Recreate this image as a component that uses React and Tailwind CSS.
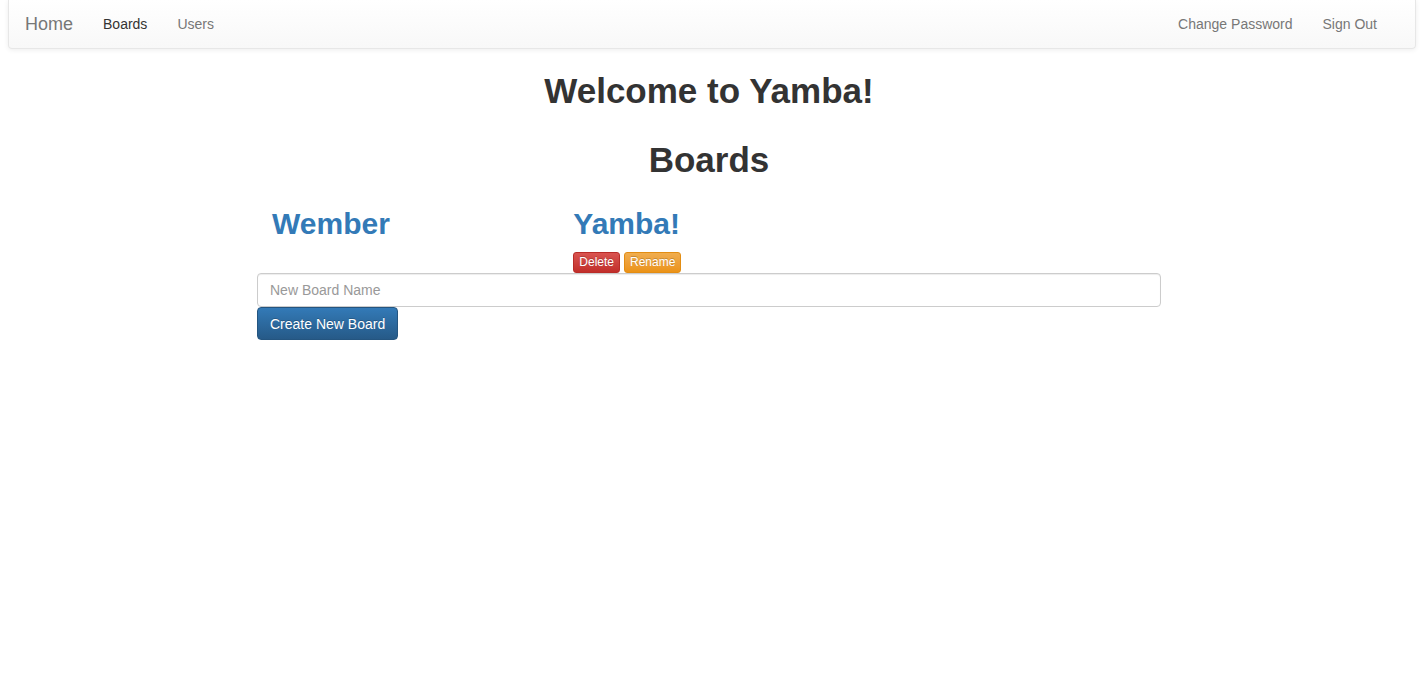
import React from "react";

const boards = [
  { name: "Wember", editable: false },
  { name: "Yamba!", editable: true },
];

export default function App() {
  return (
    <div className="min-h-screen bg-white text-[#333] font-['Liberation_Sans',Arial,sans-serif] text-[14px]">

      {/* Navbar */}

      <nav className="
        mx-2 h-[49px]
        flex items-center justify-between
        bg-gradient-to-b from-white to-[#f8f8f8]
        border border-t-0 border-[#e7e7e7]
        rounded-b-[4px]
        shadow-[0_1px_5px_rgba(0,0,0,0.075)]
      ">
        <div className="flex items-center">
          <a className="pl-4 pr-[15px] text-[18px] text-[#777] leading-[20px]">Home</a>
          <a className="px-[15px] text-[#333] leading-[20px]">Boards</a>
          <a className="px-[15px] text-[#777] leading-[20px]">Users</a>
        </div>
        <div className="flex items-center pr-[23px]">
          <a className="px-[15px] text-[#777] leading-[20px]">Change Password</a>
          <a className="px-[15px] text-[#777] leading-[20px]">Sign Out</a>
        </div>
      </nav>

      {/* Content */}

      <main className="ml-[257px] w-[904px]">
        <h1 className="mt-[23px] text-center text-[35px] leading-[1.1] font-bold">
          Welcome to Yamba!
        </h1>
        <h1 className="mt-[30px] mb-2.5 text-center text-[35px] leading-[1.1] font-bold">
          Boards
        </h1>

        <div className="grid grid-cols-3">
          {boards.map((board) => (
            <div key={board.name} className="px-[15px]">
              <h2 className="mt-[18px] mb-3 text-[30px] leading-[33px] font-bold text-[#337ab7]">
                {board.name}
              </h2>
              {board.editable && (
                <div className="flex gap-1">
                  <button className="
                    px-[5px]
                    text-[12px] leading-[19px] text-white
                    [text-shadow:0_-1px_0_rgba(0,0,0,0.2)]
                    border border-[#b92c28] rounded-[3px]
                    bg-gradient-to-b from-[#d9534f] to-[#c12e2a]
                  ">
                    Delete
                  </button>
                  <button className="
                    px-[5px]
                    text-[12px] leading-[19px] text-white
                    [text-shadow:0_-1px_0_rgba(0,0,0,0.2)]
                    border border-[#e38d13] rounded-[3px]
                    bg-gradient-to-b from-[#f0ad4e] to-[#eb9316]
                  ">
                    Rename
                  </button>
                </div>
              )}
            </div>
          ))}
        </div>

        <input
          className="
            block w-full h-[34px]
            px-3 py-1.5
            border border-[#ccc] rounded-[4px]
            shadow-[inset_0_1px_1px_rgba(0,0,0,0.075)]
            text-[14px] text-[#555]
            placeholder:text-[#999]
            outline-none
          "
          placeholder="New Board Name"
        />

        <button className="
          block h-[33px] px-3
          text-[14px] leading-[20px] text-white
          [text-shadow:0_-1px_0_rgba(0,0,0,0.2)]
          border border-[#245580] rounded-[4px]
          bg-gradient-to-b from-[#337ab7] to-[#265a88]
        ">
          Create New Board
        </button>
      </main>
    </div>
  );
}
